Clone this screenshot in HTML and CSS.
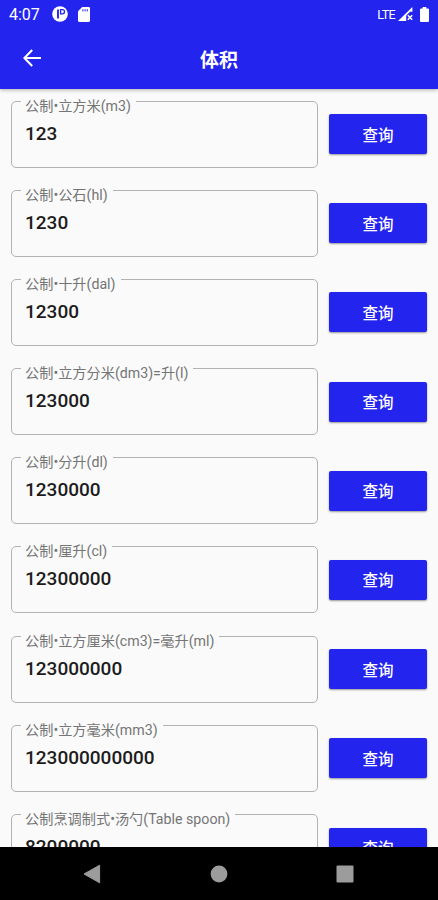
FILE: index.html
```html
<!DOCTYPE html>
<html lang="zh-CN">
<head>
  <meta charset="UTF-8">
  <title>体积</title>
  <link rel="stylesheet" href="styles.css">
</head>
<body>
  <header class="top">
    <div class="status">
      <span class="clock">4:07</span>
      <svg class="ic-app" width="16" height="16" viewBox="0 0 16 16">
        <circle cx="8" cy="8" r="7.8" fill="#fff"/>
        <path d="M6 3.4V12.4" fill="none" stroke="#2424ef" stroke-width="1.9"/>
        <path d="M8.6 3.6H10.4a2.1 2.1 0 0 1 0 4.2H8.6Z" fill="none" stroke="#2424ef" stroke-width="1.3"/>
      </svg>
      <svg class="ic-card" width="12" height="15" viewBox="0 0 12 15">
        <path d="M4.2 0H10.8Q12 0 12 1.2V13.6Q12 15 10.8 15H1.2Q0 15 0 13.6V4.2Z" fill="#fff"/>
        <path d="M4.9 2.2V4.4M7.1 2.2V4.4M9.3 2.2V4.4" stroke="#2424ef" stroke-width="1"/>
      </svg>
      <span class="lte">LTE</span>
      <svg class="ic-signal" width="15" height="14" viewBox="0 0 15 14">
        <path d="M0 14L14.4 0V4.8H12.6V4.2L8.2 8.6V14Z" fill="#fff"/>
        <path d="M9.8 8.2L14.2 12.8M14.2 8.2L9.8 12.8" stroke="#fff" stroke-width="1.5"/>
      </svg>
      <svg class="ic-battery" width="9" height="15" viewBox="0 0 9 15">
        <path d="M2.7 0H6.3V1.4H8Q9 1.4 9 2.4V14Q9 15 8 15H1Q0 15 0 14V2.4Q0 1.4 1 1.4H2.7Z" fill="#fff"/>
      </svg>
    </div>
    <div class="bar">
      <svg class="back" width="18" height="18" viewBox="0 0 18 18">
        <path d="M18 9H1.6M9.2 1L1.4 9L9.2 17" fill="none" stroke="#fff" stroke-width="2.1"/>
      </svg>
      <h1>体积</h1>
    </div>
  </header>

  <main class="list">
    <div class="row">
      <div class="field"><label>公制•立方米(m3)</label><span class="value">123</span></div>
      <button>查询</button>
    </div>
    <div class="row">
      <div class="field"><label>公制•公石(hl)</label><span class="value">1230</span></div>
      <button>查询</button>
    </div>
    <div class="row">
      <div class="field"><label>公制•十升(dal)</label><span class="value">12300</span></div>
      <button>查询</button>
    </div>
    <div class="row">
      <div class="field"><label>公制•立方分米(dm3)=升(l)</label><span class="value">123000</span></div>
      <button>查询</button>
    </div>
    <div class="row">
      <div class="field"><label>公制•分升(dl)</label><span class="value">1230000</span></div>
      <button>查询</button>
    </div>
    <div class="row">
      <div class="field"><label>公制•厘升(cl)</label><span class="value">12300000</span></div>
      <button>查询</button>
    </div>
    <div class="row">
      <div class="field"><label>公制•立方厘米(cm3)=毫升(ml)</label><span class="value">123000000</span></div>
      <button>查询</button>
    </div>
    <div class="row">
      <div class="field"><label>公制•立方毫米(mm3)</label><span class="value">123000000000</span></div>
      <button>查询</button>
    </div>
    <div class="row">
      <div class="field"><label>公制烹调制式•汤勺(Table spoon)</label><span class="value">8200000</span></div>
      <button>查询</button>
    </div>
  </main>

  <!-- Android navigation keys -->
  <nav class="keys">
    <svg width="18" height="20" viewBox="0 0 18 20"><path d="M16.6 1.2V18.8L1 10Z" fill="#9c9c9c" stroke="#9c9c9c" stroke-linejoin="round"/></svg>
    <svg width="18" height="18" viewBox="0 0 18 18"><circle cx="9" cy="9" r="8.4" fill="#9c9c9c"/></svg>
    <svg width="18" height="18" viewBox="0 0 18 18"><rect x="0.5" y="0.5" width="17" height="17" rx="1" fill="#9c9c9c"/></svg>
  </nav>
</body>
</html>
```

FILE: styles.css
```css
* {
  box-sizing: border-box;
}
body {
  margin: 0;
  height: 900px;
  display: flex;
  flex-direction: column;
  overflow: hidden;
  background: #fafafa;
  font-family: Roboto, "Noto Sans CJK SC", sans-serif;
}
svg {
  display: block;
  flex: none;
}

/* Header */
.top {
  flex: none;
  height: 89px;
  background: #2424ef;
  color: #fff;
  box-shadow: 0 1px 4px rgba(0, 0, 0, 0.3);
  z-index: 1;
}
.status {
  height: 28px;
  display: flex;
  align-items: center;
  padding: 0 9px;
}
.clock {
  width: 43px;
  font-size: 16px;
}
.ic-card {
  margin-left: 10px;
}
.lte {
  margin-left: auto;
  font-size: 12.5px;
  letter-spacing: -0.6px;
}
.ic-signal {
  margin-left: 3px;
}
.ic-battery {
  margin-left: 7px;
}
.bar {
  height: 60px;
  display: grid;
  grid-template-columns: 1fr auto 1fr;
  align-items: center;
  padding: 0 23px;
}
.bar h1 {
  margin: 1px 0 0;
  font-size: 19px;
  font-weight: 700;
}

/* Conversion rows */
.list {
  flex: 1;
  min-height: 0;
  overflow: hidden;
  padding: 11.5px 11px 0;
}
.row {
  display: flex;
  gap: 11px;
  height: 89.2px;
}
.field {
  position: relative;
  width: 307px;
  height: 67px;
  padding: 21px 13px 0;
  border: 1px solid #b2b2b2;
  border-radius: 5px;
}
.field label {
  position: absolute;
  top: -6px;
  left: 9px;
  padding: 0 5px 0 4px;
  background: #fafafa;
  color: #757575;
  font-size: 14.2px;
  line-height: 20px;
  white-space: nowrap;
}
.value {
  display: block;
  color: #1c1c1c;
  font-size: 19px;
  font-weight: 500;
  line-height: 22px;
}
button {
  width: 98px;
  height: 40px;
  margin-top: 13.5px;
  padding: 0 0 1px;
  border: 0;
  border-radius: 2px;
  background: #2424ef;
  box-shadow: 0 1px 2px rgba(0, 0, 0, 0.4);
  color: #fff;
  font-family: inherit;
  font-size: 15.5px;
  font-weight: 500;
}

.keys {
  flex: none;
  height: 53px;
  display: flex;
  justify-content: space-between;
  align-items: center;
  padding: 0 84px 0 83px;
  background: #000;
}
```
